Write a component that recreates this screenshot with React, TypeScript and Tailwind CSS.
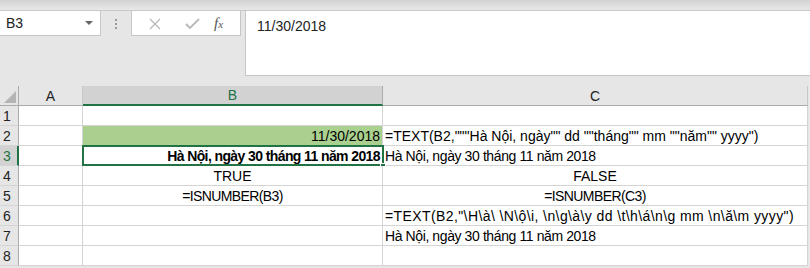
const font = 'font-["Liberation_Sans",Arial,sans-serif]';

type Cell = { text?: string; align?: 'left' | 'center' | 'right'; bold?: boolean; fill?: boolean; track?: string };
type Row = { n: number; a?: Cell; b?: Cell; c?: Cell };

const rows: Row[] = [
  { n: 1 },
  {
    n: 2,
    b: { text: '11/30/2018', align: 'right', fill: true },
    c: { text: '=TEXT(B2,"""Hà Nội, ngày"" dd ""tháng"" mm ""năm"" yyyy")' },
  },
  {
    n: 3,
    b: { text: 'Hà Nội, ngày 30 tháng 11 năm 2018', align: 'right', bold: true, track: 'tracking-[-0.6px]' },
    c: { text: 'Hà Nội, ngày 30 tháng 11 năm 2018', track: 'tracking-[-0.4px]' },
  },
  {
    n: 4,
    b: { text: 'TRUE', align: 'center' },
    c: { text: 'FALSE', align: 'center' },
  },
  {
    n: 5,
    b: { text: '=ISNUMBER(B3)', align: 'center', track: 'tracking-[-0.6px]' },
    c: { text: '=ISNUMBER(C3)', align: 'center', track: 'tracking-[-0.6px]' },
  },
  {
    n: 6,
    c: {
      text: '=TEXT(B2,"\\H\\à\\ \\N\\ộ\\i, \\n\\g\\à\\y dd \\t\\h\\á\\n\\g mm \\n\\ă\\m yyyy")',
      track: 'tracking-[0.4px]',
    },
  },
  { n: 7, c: { text: 'Hà Nội, ngày 30 tháng 11 năm 2018', track: 'tracking-[-0.4px]' } },
  { n: 8 },
];

function GridCell({ cell, width }: { cell?: Cell; width: string }) {
  const align =
    cell?.align === 'right' ? 'justify-end' : cell?.align === 'center' ? 'justify-center' : 'justify-start';
  return (
    <div
      className={`${width} h-full shrink-0 flex items-center pt-[2px] px-[2px] border-r border-b border-[#d4d4d4] whitespace-nowrap overflow-visible text-[14px] text-black ${align} ${
        cell?.fill ? 'bg-[#a9d08e]' : 'bg-white'
      } ${cell?.bold ? 'font-bold' : ''} ${cell?.track ?? ''}`}
    >
      {cell?.text}
    </div>
  );
}

export default function App() {
  return (
    <div className={`w-[810px] h-[268px] bg-[#e6e6e6] overflow-hidden ${font}`}>
      {/* ribbon edge */}
      <div className="h-[11px] bg-gradient-to-b from-[#d2d2d2] to-[#e8e8e8] border-b border-[#c8c8c8]" />

      {/* formula bar */}
      <div className="flex h-[65px]">
        <div className="w-[101px] h-[25px] bg-white border-r border-b border-[#c6c6c6] flex items-center justify-between pl-[6px] pr-[7px] text-[14px] text-[#222]">
          <span>B3</span>
          <span className="w-0 h-0 border-l-[4px] border-r-[4px] border-t-[4px] border-l-transparent border-r-transparent border-t-[#666]" />
        </div>
        <div className="w-[30px] h-[25px] flex flex-col items-center justify-center gap-[2px]">
          <span className="w-[2px] h-[2px] bg-[#9a9a9a]" />
          <span className="w-[2px] h-[2px] bg-[#9a9a9a]" />
          <span className="w-[2px] h-[2px] bg-[#9a9a9a]" />
        </div>
        <div className="w-[110px] h-[25px] bg-white border-x border-b border-[#c6c6c6] flex items-center">
          <svg width="38" height="25" viewBox="0 0 38 25" className="ml-[4px]">
            <path d="M14 8 L24 18 M24 8 L14 18" stroke="#b8b8b8" strokeWidth="1.3" />
          </svg>
          <svg width="38" height="25" viewBox="0 0 38 25">
            <path d="M12 13 L16 17 L25 8" stroke="#b8b8b8" strokeWidth="1.8" fill="none" />
          </svg>
          <span className='ml-[2px] italic text-[15px] text-[#555] font-["Liberation_Serif",serif]'>
            f<span className="text-[11px]">x</span>
          </span>
        </div>
        <div className="w-[4px]" />
        <div className="flex-1 h-[65px] bg-white border-l border-b border-[#c6c6c6] pl-[11px] pt-[5px] text-[14px] text-[#222]">
          11/30/2018
        </div>
      </div>

      <div className="h-[10px]" />

      {/* column headers */}
      <div className="flex h-[20px] text-[14px] text-[#222]">
        <div className="w-[19px] h-full shrink-0 bg-[#e6e6e6] border-r border-b border-[#ababab] relative">
          <span className="absolute right-[2px] bottom-[2px] w-0 h-0 [border-bottom:12px_solid_#b4b4b4] [border-left:12px_solid_transparent]" />
        </div>
        <div className="w-[64px] h-full shrink-0 flex items-center justify-center pt-[1px] border-r border-b border-[#ababab] border-r-[#c6c6c6]">
          A
        </div>
        <div className="w-[300px] h-full shrink-0 flex items-center justify-center pt-[1px] bg-[#d2d2d2] text-[#217346] border-r border-[#ababab] border-b-2 border-b-[#217346]">
          B
        </div>
        <div className="w-[425px] h-full shrink-0 flex items-center justify-center pt-[1px] border-r border-b border-[#ababab] border-r-[#c6c6c6]">
          C
        </div>
      </div>

      {/* rows */}
      {rows.map((r) => (
        <div key={r.n} className="flex h-[20px] relative">
          <div
            className={`w-[19px] h-full shrink-0 flex items-center pl-[3px] pt-[2px] text-[14px] border-b border-[#d4d4d4] ${
              r.n === 3
                ? 'bg-[#d2d2d2] text-[#217346] border-r-2 border-r-[#217346]'
                : 'bg-[#e6e6e6] text-[#222] border-r border-r-[#ababab]'
            }`}
          >
            {r.n}
          </div>
          <GridCell cell={r.a} width="w-[64px]" />
          <GridCell cell={r.b} width="w-[300px]" />
          <GridCell cell={r.c} width="w-[425px]" />
          {r.n === 3 && (
            <>
              <div className="absolute left-[82px] top-[-1px] w-[302px] h-[21px] border-2 border-[#217346] pointer-events-none" />
              <div className="absolute left-[380px] top-[17px] w-[6px] h-[6px] bg-[#217346] border border-white" />
            </>
          )}
        </div>
      ))}
    </div>
  );
}
